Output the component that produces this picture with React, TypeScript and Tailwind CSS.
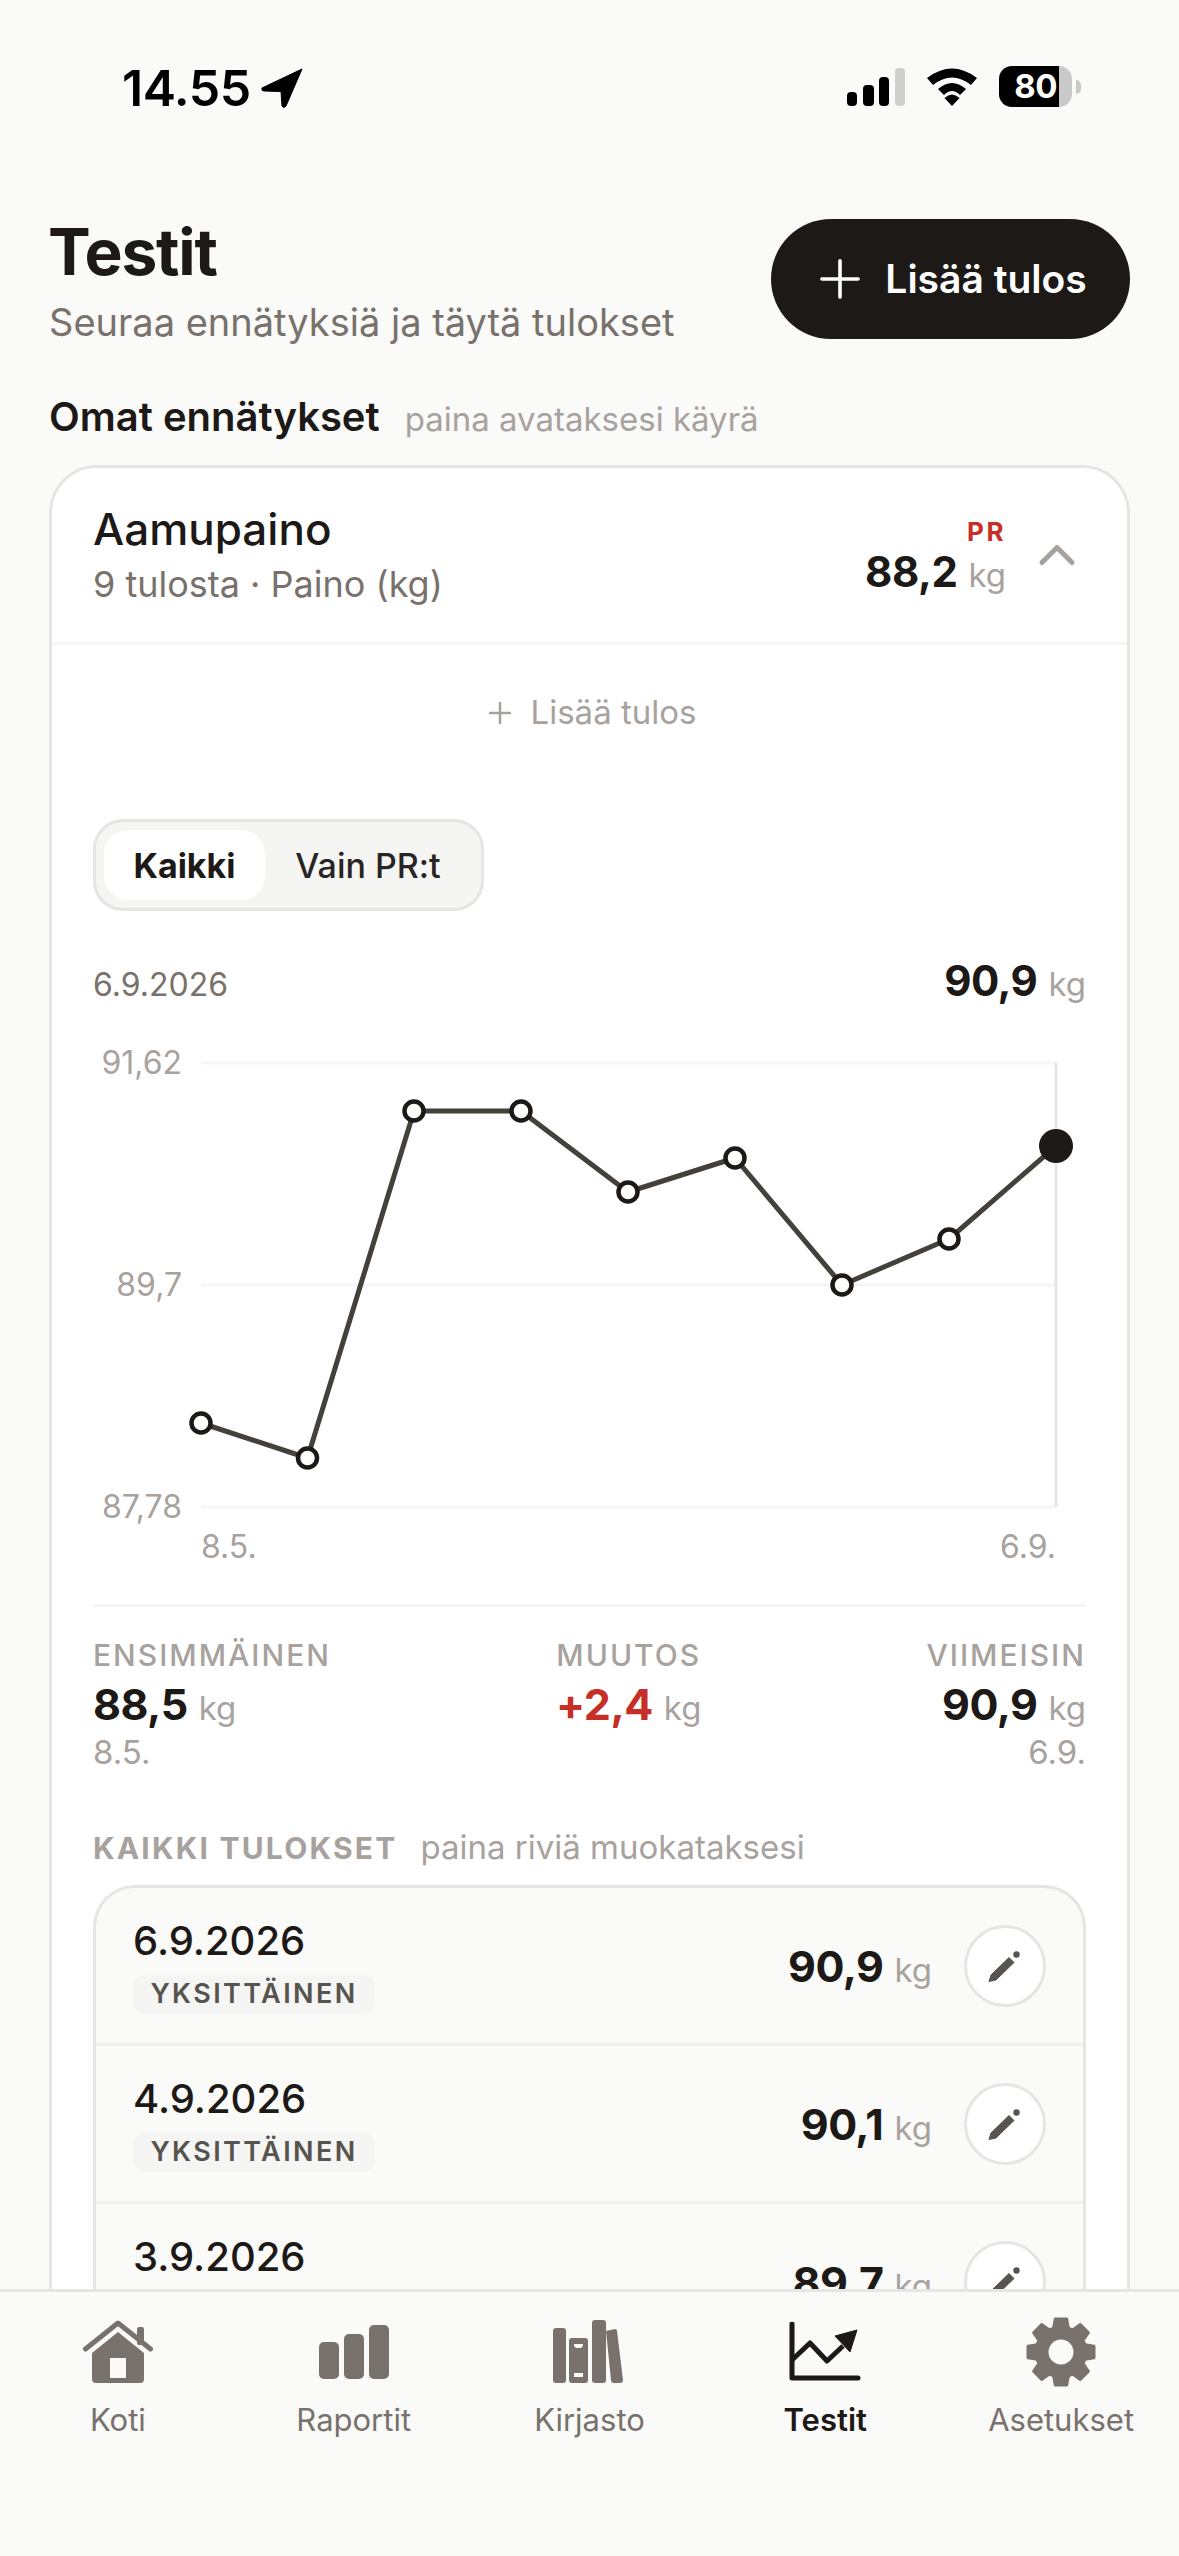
import { Plus, ChevronUp } from 'lucide-react';

const points = [
    [108, 383],
    [214.5, 418],
    [321, 71],
    [428, 71],
    [535, 152],
    [642, 118],
    [749, 245],
    [856, 199],
    [963, 106],
];

const rows = [
    { date: '6.9.2026', value: '90,9' },
    { date: '4.9.2026', value: '90,1' },
    { date: '3.9.2026', value: '89,7' },
];

// 8 teeth gear outline, first tooth straight up
const gearPath = Array.from({ length: 8 }, (_, i) => {
    const a = (i * Math.PI) / 4 - Math.PI / 2;
    const pt = (r: number, d: number) => `${(36 + r * Math.cos(a + d)).toFixed(1)} ${(36 + r * Math.sin(a + d)).toFixed(1)}`;
    return `L${pt(25, -0.3)} L${pt(33.5, -0.17)} L${pt(33.5, 0.17)} L${pt(25, 0.3)}`;
}).join(' ').replace('L', 'M') + ' Z';

function Value({ value, red, size = 'text-[43px]' }: { value: string; red?: boolean; size?: string }) {
    return (
        <span className="whitespace-nowrap leading-none">
            <span className={`${size} font-bold tracking-[-0.5px] ${red ? 'text-[#c62f28]' : 'text-[#1c1917]'}`}>{value}</span>
            <span className="ml-[11px] text-[33px] font-normal text-[#a8a29e]">kg</span>
        </span>
    );
}

function StatusBar() {
    return (
        <div className="flex h-[174px] items-start justify-between pl-[122px] pr-[98px] pt-[62px]">
            <div className="flex items-center gap-[10px]">
                <span className="text-[50px] font-semibold leading-[52px] tracking-[-0.5px] text-black">14.55</span>
                <svg width="42" height="40" viewBox="0 0 42 40">
                    <path d="M41 1 L1 20 Q0 23 3 23 L20 23.5 L21 38 Q22 41 25 38 Z" fill="#000" stroke="#000" strokeWidth="1" />
                </svg>
            </div>
            <div className="mt-[4px] flex items-center gap-[21px]">
                <svg width="58" height="38" viewBox="0 0 58 38">
                    <rect x="0" y="24" width="10" height="14" rx="4" fill="#000" />
                    <rect x="16" y="17" width="11" height="21" rx="4" fill="#000" />
                    <rect x="32" y="9" width="10" height="29" rx="4" fill="#000" />
                    <rect x="48" y="0" width="10" height="38" rx="4" fill="#cfcfcf" />
                </svg>
                <svg width="52" height="38" viewBox="0 0 52 38">
                    <path d="M1 10 Q26 -9 51 10 L45 17 Q26 2 7 17 Z" fill="#000" />
                    <path d="M12 21 Q26 9 40 21 L34 27 Q26 19 18 27 Z" fill="#000" />
                    <path d="M18.5 30 Q26 23 33.5 30 L26 38 Z" fill="#000" />
                </svg>
                <div className="flex items-center">
                    <div className="flex h-[41px] w-[73px] overflow-hidden rounded-[13px] bg-[#c9c9c9]">
                        <div className="flex w-[60px] items-center justify-end bg-black pr-[2px] text-[33px] font-bold leading-none tracking-[-0.5px] text-white">80</div>
                    </div>
                    <div className="ml-[4px] h-[14px] w-[5px] rounded-r-full bg-[#c9c9c9]" />
                </div>
            </div>
        </div>
    );
}

function PriceChart() {
    const line = points.map(p => p.join(',')).join(' ');
    const last = points[points.length - 1];
    return (
        <svg width="992" height="564" viewBox="0 0 992 564" className="mt-[31px] block">
            {[23, 245, 467].map(y => (
                <line key={y} x1="108" x2="963" y1={y} y2={y} stroke="#f5f5f4" strokeWidth="3" />
            ))}
            <line x1="963" x2="963" y1="23" y2="467" stroke="#e7e5e4" strokeWidth="3" />
            <polyline points={line} fill="none" stroke="#44403c" strokeWidth="5" strokeLinejoin="round" />
            {points.slice(0, -1).map(([x, y]) => (
                <circle key={x} cx={x} cy={y} r="9.5" fill="#fff" stroke="#1c1917" strokeWidth="4.5" />
            ))}
            <circle cx={last[0]} cy={last[1]} r="17" fill="#1c1917" />
            <g fill="#a8a29e" fontSize="32" fontFamily="Inter, sans-serif">
                <text x="89" y="34" textAnchor="end">91,62</text>
                <text x="89" y="256" textAnchor="end">89,7</text>
                <text x="89" y="478" textAnchor="end">87,78</text>
                <text x="108" y="518">8.5.</text>
                <text x="963" y="518" textAnchor="end">6.9.</text>
            </g>
        </svg>
    );
}

function Stat({ label, value, sub, align, red }: { label: string; value: string; sub?: string; align: string; red?: boolean }) {
    return (
        <div className={`flex flex-col ${align}`}>
            <span className="text-[30px] font-medium leading-[36px] tracking-[2px] text-[#a8a29e]">{label}</span>
            <span className="mt-[10px] h-[50px]"><Value value={value} red={red} /></span>
            <span className="-mt-[1px] h-[40px] text-[33px] leading-[40px] text-[#a8a29e]">{sub}</span>
        </div>
    );
}

function ResultRow({ date, value }: { date: string; value: string }) {
    return (
        <div className="flex h-[158px] shrink-0 items-start justify-between border-b-[3px] border-[#f0efee] pl-[37px] pr-[37px] pt-[28px]">
            <div className="flex flex-col items-start">
                <span className="text-[40px] font-medium leading-[50px] text-[#1c1917]">{date}</span>
                <span className="mt-[9px] flex h-[39px] w-[242px] items-center justify-center rounded-[12px] bg-[#f5f5f4] text-[27px] font-semibold tracking-[2.4px] text-[#57534e]">YKSITTÄINEN</span>
            </div>
            <div className="mt-[9px] flex items-center gap-[32px]">
                <Value value={value} />
                <div className="flex h-[82px] w-[82px] items-center justify-center rounded-full border-[3px] border-[#e7e5e4] bg-white">
                    <svg width="36" height="36" viewBox="0 0 36 36">
                        <path d="M2 33.5 L4 27 L22 9.5 L27 14.5 L9 32 Z" fill="#57534e" stroke="#57534e" strokeWidth="1" strokeLinejoin="round" />
                        <circle cx="29.5" cy="6.5" r="3.2" fill="#57534e" />
                    </svg>
                </div>
            </div>
        </div>
    );
}

const navItems = [
    {
        label: 'Koti',
        icon: (
            <svg width="70" height="64" viewBox="0 0 70 64" fill="#78716c">
                <path d="M2.5 29 L35 3 L67.5 29" fill="none" stroke="#78716c" strokeWidth="5" strokeLinecap="round" strokeLinejoin="round" />
                <rect x="54" y="7" width="7" height="18" rx="2" />
                <path fillRule="evenodd" d="M35 12 L61 33 L61 59 Q61 63 57 63 L13 63 Q9 63 9 59 L9 33 Z M27 38 L27 58 L43 58 L43 38 Z" />
            </svg>
        ),
    },
    {
        label: 'Raportit',
        icon: (
            <svg width="70" height="55" viewBox="0 0 70 55" fill="#78716c">
                <rect x="0" y="17" width="20" height="37" rx="5" />
                <rect x="25" y="9" width="20" height="45" rx="5" />
                <rect x="50" y="0" width="20" height="54" rx="5" />
            </svg>
        ),
    },
    {
        label: 'Kirjasto',
        icon: (
            <svg width="72" height="64" viewBox="0 0 72 64" fill="#78716c">
                <rect x="0" y="8" width="13" height="55" rx="3" />
                <path fillRule="evenodd" d="M16 21 Q16 18 19 18 L32 18 Q35 18 35 21 L35 60 Q35 63 32 63 L19 63 Q16 63 16 60 Z M21 24 Q21 28 24 28 L27 28 Q30 28 30 24 Z M21 53 L21 57 L30 57 L30 53 Z" />
                <rect x="39" y="0" width="14" height="63" rx="3" />
                <path d="M53 11 L62 9 Q64 9 64 11 L70 60 Q70 63 67 63 L61 63 Q58 63 58 60 Z" />
            </svg>
        ),
    },
    {
        label: 'Testit',
        active: true,
        icon: (
            <svg width="72" height="60" viewBox="0 0 72 60">
                <path d="M3 2 L3 56 L69 56" fill="none" stroke="#1c1917" strokeWidth="5" strokeLinecap="round" strokeLinejoin="round" />
                <path d="M3 38 L21 21 L38 39 L54 24" fill="none" stroke="#1c1917" strokeWidth="5" strokeLinejoin="round" />
                <path d="M46 14 L68 8 L61 30 Z" fill="#1c1917" stroke="#1c1917" strokeWidth="1" strokeLinejoin="round" />
            </svg>
        ),
    },
    {
        label: 'Asetukset',
        icon: (
            <svg width="72" height="72" viewBox="0 0 72 72">
                <path d={gearPath} fill="#78716c" stroke="#78716c" strokeWidth="3" strokeLinejoin="round" />
                <circle cx="36" cy="36" r="12.5" fill="#fafaf9" />
            </svg>
        ),
    },
];

function BottomNav() {
    return (
        <nav className="flex h-[267px] shrink-0 border-t-[3px] border-[#e7e5e4] bg-[#fafaf9] pt-[24px]">
            {navItems.map(item => (
                <div key={item.label} className="flex flex-1 flex-col items-center">
                    <div className="flex h-[72px] items-center justify-center">{item.icon}</div>
                    <span className={`mt-[12px] text-[31px] leading-[40px] ${item.active ? 'font-semibold text-[#1c1917]' : 'text-[#78716c]'}`}>
                        {item.label}
                    </span>
                </div>
            ))}
        </nav>
    );
}

export default function App() {
    return (
        <div className="flex h-[2556px] w-[1179px] flex-col overflow-hidden bg-[#fafaf9] font-['Inter',sans-serif]">
            <main className="min-h-0 flex-1 overflow-hidden">
                <StatusBar />

                {/* Header */}
                <header className="flex items-start justify-between px-[49px] pt-[45px]">
                    <div>
                        <h1 className="-ml-[1px] -mt-[3px] text-[64px] font-bold leading-[72px] tracking-[-1.2px] text-[#1c1917]">Testit</h1>
                        <p className="mt-[10px] text-[38px] leading-[48px] text-[#78716c]">Seuraa ennätyksiä ja täytä tulokset</p>
                    </div>
                    <button className="flex h-[120px] w-[359px] items-center justify-center gap-[14px] rounded-full bg-[#1c1917] pr-[5px] text-[39px] font-semibold text-white">
                        <Plus size={62} strokeWidth={1.4} />
                        Lisää tulos
                    </button>
                </header>

                <div className="mt-[47px] flex items-baseline gap-[25px] px-[49px]">
                    <span className="text-[40px] font-semibold leading-[48px] text-[#1c1917]">Omat ennätykset</span>
                    <span className="text-[33px] leading-[48px] text-[#a8a29e]">paina avataksesi käyrä</span>
                </div>

                {/* Test card */}
                <section className="mx-[49px] mt-[22px] rounded-t-[48px] border-[3px] border-[#e7e5e4] bg-white">
                    <div className="flex h-[177px] items-center justify-between border-b-[3px] border-[#f5f5f4] pl-[41px] pr-[40px]">
                        <div>
                            <div className="text-[44px] font-medium leading-[56px] text-[#1c1917]">Aamupaino</div>
                            <div className="mt-[2px] text-[36px] leading-[50px] text-[#78716c]">9 tulosta · Paino (kg)</div>
                        </div>
                        <div className="flex items-center gap-[21px]">
                            <div className="flex flex-col items-end">
                                <span className="text-[26px] font-bold leading-[30px] tracking-[2.5px] text-[#c62f28]">PR</span>
                                <span className="mt-[4px]"><Value value="88,2" size="text-[42px]" /></span>
                            </div>
                            <ChevronUp size={60} strokeWidth={2} color="#a8a29e" />
                        </div>
                    </div>

                    <div className="px-[41px]">
                        <div className="flex h-[135px] items-center justify-center gap-[14px] text-[33px] text-[#a8a29e]">
                            <Plus size={34} strokeWidth={1.8} />
                            Lisää tulos
                        </div>

                        <div className="mt-[39px] flex h-[92px] w-[391px] items-center gap-[3px] rounded-[30px] border-[3px] border-[#e7e5e4] bg-[#f5f5f4] pl-[8px]">
                            <div className="flex h-[70px] w-[161px] items-center justify-center rounded-[24px] bg-white text-[34px] font-bold text-[#1c1917]">Kaikki</div>
                            <div className="flex h-[70px] w-[200px] items-center justify-center text-[34px] font-medium text-[#292524]">Vain PR:t</div>
                        </div>

                        <div className="mt-[49px] flex items-baseline justify-between">
                            <span className="text-[32px] text-[#78716c]">6.9.2026</span>
                            <Value value="90,9" size="text-[42px]" />
                        </div>

                        <PriceChart />

                        <div className="border-t-[3px] border-[#f5f5f4] pt-[30px]">
                            <div className="flex items-start justify-between">
                                <Stat label="ENSIMMÄINEN" value="88,5" sub="8.5." align="items-start" />
                                <Stat label="MUUTOS" value="+2,4" align="items-center" red />
                                <Stat label="VIIMEISIN" value="90,9" sub="6.9." align="items-end" />
                            </div>
                        </div>

                        <div className="mt-[55px] flex items-baseline gap-[23px]">
                            <span className="text-[30px] font-bold leading-[40px] tracking-[2.2px] text-[#a8a29e]">KAIKKI TULOKSET</span>
                            <span className="text-[33px] leading-[40px] text-[#a8a29e]">paina riviä muokataksesi</span>
                        </div>

                        <div className="mt-[17px] rounded-t-[42px] border-[3px] border-b-0 border-[#e7e5e4] bg-[#fafaf9]">
                            {rows.map(row => (
                                <ResultRow key={row.date} date={row.date} value={row.value} />
                            ))}
                        </div>
                    </div>
                </section>
            </main>

            <BottomNav />
        </div>
    );
}
